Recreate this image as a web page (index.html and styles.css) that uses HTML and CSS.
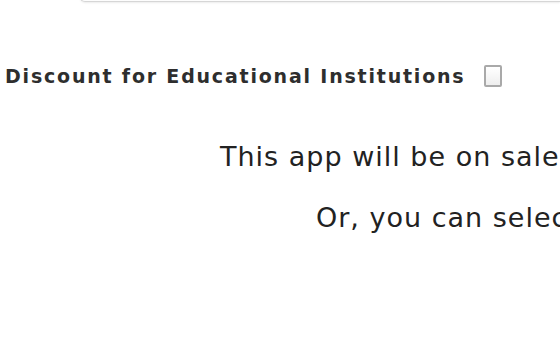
FILE: index.html
```html
<!DOCTYPE html>
<html lang="en">
<head>
    <meta charset="UTF-8">
    <title>App pricing</title>
    <link rel="stylesheet" href="styles.css">
</head>
<body>
    <div class="field-top"></div>

    <div class="option-row">
        <label class="option-label" for="eduDiscount">Discount for Educational Institutions</label>
        <span class="check-box" id="eduDiscount"></span>
    </div>

    <div class="notice">
        <p class="notice-line first">This app will be on sale</p>
        <p class="notice-line second">Or, you can select</p>
    </div>
</body>
</html>
```

FILE: styles.css
```css
body {
    margin: 0;
    background: #fff;
    font-family: "DejaVu Sans", Verdana, sans-serif;
    color: #222;
    overflow: hidden;
    width: 560px;
    height: 350px;
}
.field-top {
    margin: -40px 0 0 80px;
    height: 40px;
    border: 1px solid #d6d6d6;
    border-right: none;
    border-radius: 0 0 0 5px;
    box-shadow: 0 1px 2px rgba(0, 0, 0, 0.08);
    background: #fdfdfd;
}
.option-row {
    display: flex;
    align-items: center;
    gap: 19px;
    margin-top: 63px;
    padding-left: 5px;
}
.option-label {
    font-weight: bold;
    font-size: 19px;
    letter-spacing: 1.8px;
    color: #2e2e2e;
    white-space: nowrap;
}
.check-box {
    width: 14px;
    height: 18px;
    border: 2px solid #a9a9a9;
    border-radius: 2px;
    background: linear-gradient(#fff, #eee);
}
.notice {
    margin-top: 54px;
    white-space: nowrap;
    font-size: 27px;
    letter-spacing: 1px;
}
.notice-line {
    margin: 0;
}
.notice-line.first {
    padding-left: 220px;
}
.notice-line.second {
    margin-top: 30px;
    padding-left: 316px;
}
```
